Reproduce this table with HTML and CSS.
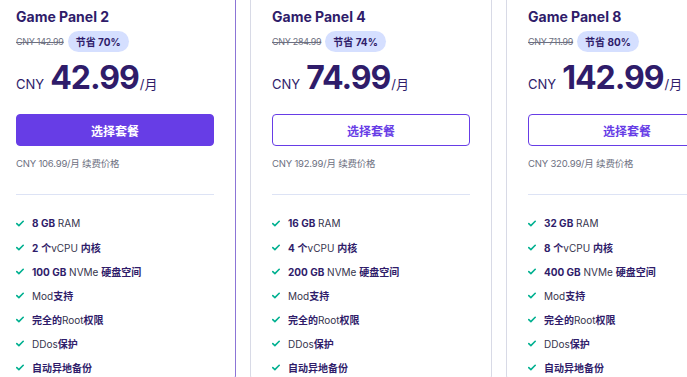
FILE: index.html
```html
<!DOCTYPE html>
<html lang="zh">
<head>
<meta charset="utf-8">
<title>Game Panel</title>
<link rel="stylesheet" href="styles.css">
</head>
<body>
<div class="plans">
  <section class="card card--selected">
    <h2 class="title">Game Panel 2</h2>
    <div class="discount"><s class="old">CNY 142.99</s><span class="badge">节省 70%</span></div>
    <div class="price"><span class="cur">CNY</span><span class="amount">42.99</span><span class="per">/月</span></div>
    <button class="btn btn--primary">选择套餐</button>
    <p class="renew">CNY 106.99/月 续费价格</p>
    <hr class="divider">
    <ul class="features">
      <li><svg class="check" viewBox="0 0 10 8"><path d="M1 4.2 L3.6 6.6 L9 1.2"/></svg><span><b>8 GB</b> RAM</span></li>
      <li><svg class="check" viewBox="0 0 10 8"><path d="M1 4.2 L3.6 6.6 L9 1.2"/></svg><span><b>2</b> <b>个</b>vCPU <b>内核</b></span></li>
      <li><svg class="check" viewBox="0 0 10 8"><path d="M1 4.2 L3.6 6.6 L9 1.2"/></svg><span><b>100 GB</b> NVMe <b>硬盘空间</b></span></li>
      <li><svg class="check" viewBox="0 0 10 8"><path d="M1 4.2 L3.6 6.6 L9 1.2"/></svg><span>Mod<b>支持</b></span></li>
      <li><svg class="check" viewBox="0 0 10 8"><path d="M1 4.2 L3.6 6.6 L9 1.2"/></svg><span><b>完全的</b>Root<b>权限</b></span></li>
      <li><svg class="check" viewBox="0 0 10 8"><path d="M1 4.2 L3.6 6.6 L9 1.2"/></svg><span>DDos<b>保护</b></span></li>
      <li><svg class="check" viewBox="0 0 10 8"><path d="M1 4.2 L3.6 6.6 L9 1.2"/></svg><span><b>自动异地备份</b></span></li>
    </ul>
  </section>
  <section class="card">
    <h2 class="title">Game Panel 4</h2>
    <div class="discount"><s class="old">CNY 284.99</s><span class="badge">节省 74%</span></div>
    <div class="price"><span class="cur">CNY</span><span class="amount">74.99</span><span class="per">/月</span></div>
    <button class="btn btn--outline">选择套餐</button>
    <p class="renew">CNY 192.99/月 续费价格</p>
    <hr class="divider">
    <ul class="features">
      <li><svg class="check" viewBox="0 0 10 8"><path d="M1 4.2 L3.6 6.6 L9 1.2"/></svg><span><b>16 GB</b> RAM</span></li>
      <li><svg class="check" viewBox="0 0 10 8"><path d="M1 4.2 L3.6 6.6 L9 1.2"/></svg><span><b>4</b> <b>个</b>vCPU <b>内核</b></span></li>
      <li><svg class="check" viewBox="0 0 10 8"><path d="M1 4.2 L3.6 6.6 L9 1.2"/></svg><span><b>200 GB</b> NVMe <b>硬盘空间</b></span></li>
      <li><svg class="check" viewBox="0 0 10 8"><path d="M1 4.2 L3.6 6.6 L9 1.2"/></svg><span>Mod<b>支持</b></span></li>
      <li><svg class="check" viewBox="0 0 10 8"><path d="M1 4.2 L3.6 6.6 L9 1.2"/></svg><span><b>完全的</b>Root<b>权限</b></span></li>
      <li><svg class="check" viewBox="0 0 10 8"><path d="M1 4.2 L3.6 6.6 L9 1.2"/></svg><span>DDos<b>保护</b></span></li>
      <li><svg class="check" viewBox="0 0 10 8"><path d="M1 4.2 L3.6 6.6 L9 1.2"/></svg><span><b>自动异地备份</b></span></li>
    </ul>
  </section>
  <section class="card">
    <h2 class="title">Game Panel 8</h2>
    <div class="discount"><s class="old">CNY 711.99</s><span class="badge">节省 80%</span></div>
    <div class="price"><span class="cur">CNY</span><span class="amount">142.99</span><span class="per">/月</span></div>
    <button class="btn btn--outline">选择套餐</button>
    <p class="renew">CNY 320.99/月 续费价格</p>
    <hr class="divider">
    <ul class="features">
      <li><svg class="check" viewBox="0 0 10 8"><path d="M1 4.2 L3.6 6.6 L9 1.2"/></svg><span><b>32 GB</b> RAM</span></li>
      <li><svg class="check" viewBox="0 0 10 8"><path d="M1 4.2 L3.6 6.6 L9 1.2"/></svg><span><b>8</b> <b>个</b>vCPU <b>内核</b></span></li>
      <li><svg class="check" viewBox="0 0 10 8"><path d="M1 4.2 L3.6 6.6 L9 1.2"/></svg><span><b>400 GB</b> NVMe <b>硬盘空间</b></span></li>
      <li><svg class="check" viewBox="0 0 10 8"><path d="M1 4.2 L3.6 6.6 L9 1.2"/></svg><span>Mod<b>支持</b></span></li>
      <li><svg class="check" viewBox="0 0 10 8"><path d="M1 4.2 L3.6 6.6 L9 1.2"/></svg><span><b>完全的</b>Root<b>权限</b></span></li>
      <li><svg class="check" viewBox="0 0 10 8"><path d="M1 4.2 L3.6 6.6 L9 1.2"/></svg><span>DDos<b>保护</b></span></li>
      <li><svg class="check" viewBox="0 0 10 8"><path d="M1 4.2 L3.6 6.6 L9 1.2"/></svg><span><b>自动异地备份</b></span></li>
    </ul>
  </section>
</div>
</body>
</html>
```

FILE: styles.css
```css
* { box-sizing: border-box; }
html, body {
  margin: 0;
  padding: 0;
  background: #ffffff;
  overflow: hidden;
}
body {
  font-family: Inter, "Noto Sans CJK SC", "Noto Sans", sans-serif;
  color: #2f1c6a;
}
.plans {
  display: flex;
  gap: 14px;
  margin-left: -6px;
  margin-top: -10px;
}
.card {
  flex: 0 0 242px;
  width: 242px;
  border: 1px solid #d8dae6;
  border-radius: 4px;
  background: #fff;
  padding: 16px 21px 0 21px;
  display: flex;
  flex-direction: column;
}
.card--selected {
  border-color: #8c75d6;
}
.title {
  margin: 0;
  font-size: 14px;
  line-height: 20px;
  font-weight: 700;
  color: #2f1c6a;
}
.discount {
  display: flex;
  align-items: center;
  gap: 4px;
  margin-top: 4px;
  height: 21px;
}
.old {
  font-size: 9px;
  color: #6d7081;
  text-decoration: line-through;
  letter-spacing: -0.3px;
}
.badge {
  display: inline-flex;
  align-items: center;
  height: 21px;
  padding: 0 8px;
  border-radius: 11px;
  background: #d5dfff;
  font-size: 10px;
  font-weight: 700;
  color: #2f1c6a;
}
.price {
  display: flex;
  align-items: baseline;
  margin-top: 6px;
  line-height: 40px;
  height: 40px;
}
.cur {
  font-size: 13px;
  color: #2f1c6a;
  margin-right: 6px;
}
.amount {
  font-size: 32px;
  font-weight: 700;
  color: #2f1c6a;
  letter-spacing: -1px;
}
.per {
  font-size: 13px;
  color: #2f1c6a;
  margin-left: 1px;
}
.btn {
  margin-top: 16px;
  height: 32px;
  width: 100%;
  border-radius: 4px;
  font-family: inherit;
  font-size: 12px;
  font-weight: 700;
  cursor: pointer;
}
.btn--primary {
  background: #673de6;
  border: 1px solid #673de6;
  color: #fff;
}
.btn--outline {
  background: #fff;
  border: 1px solid #673de6;
  color: #673de6;
}
.renew {
  margin: 11px 0 0 0;
  font-size: 9.5px;
  line-height: 14px;
  color: #6d7081;
  letter-spacing: -0.2px;
}
.divider {
  margin: 23px 0 0 0;
  border: 0;
  border-top: 1px solid #dde3f5;
  height: 0;
}
.features {
  list-style: none;
  margin: 16px 0 0 0;
  padding: 0;
}
.features li {
  display: flex;
  align-items: center;
  gap: 8px;
  height: 24px;
  font-size: 10px;
  color: #36344d;
}
.features b {
  font-weight: 700;
  color: #2f1c6a;
}
.check {
  width: 8px;
  height: 7px;
  flex: 0 0 8px;
  fill: none;
  stroke: #00b090;
  stroke-width: 2;
  stroke-linecap: round;
  stroke-linejoin: round;
}
```
